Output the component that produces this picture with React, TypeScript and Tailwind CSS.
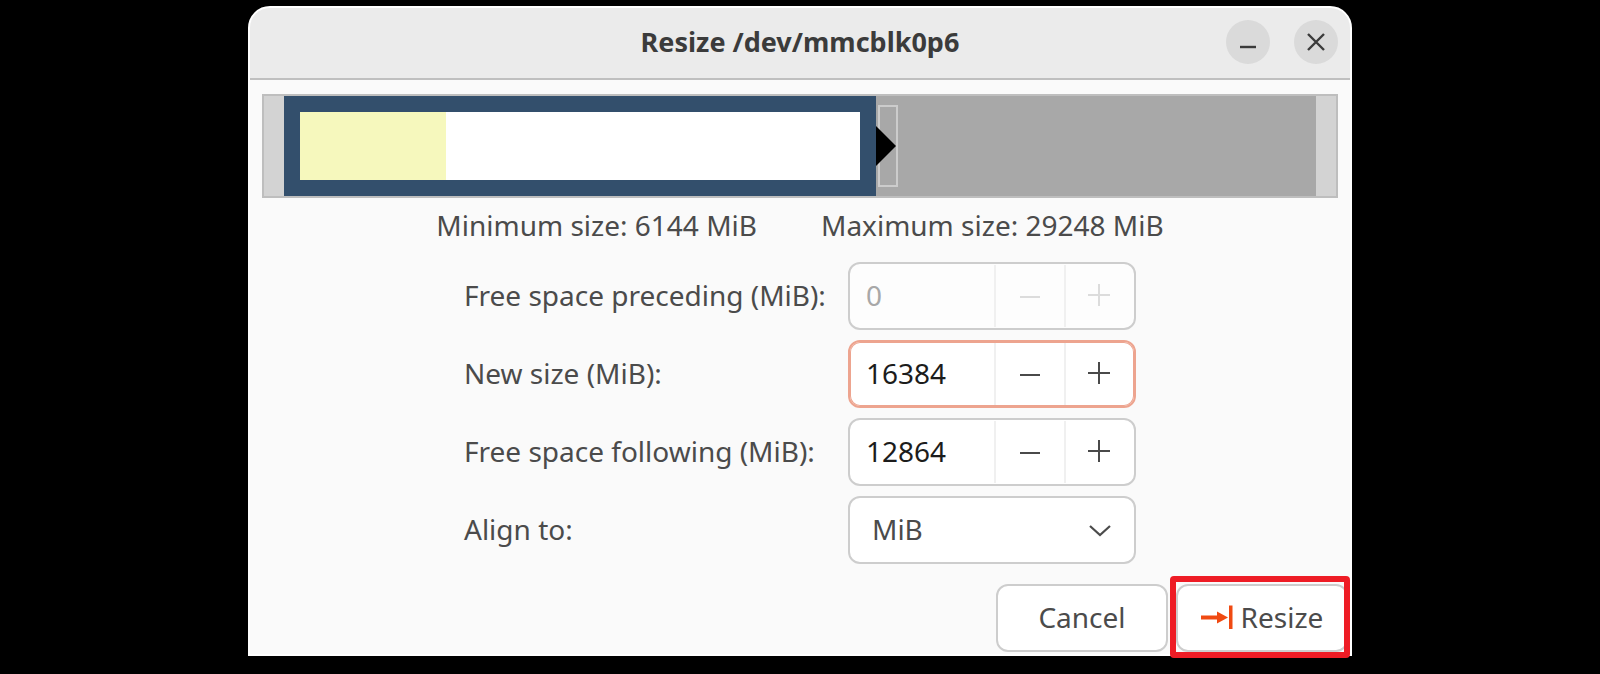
import { useState } from "react";
import type { ReactNode } from "react";

type SpinFieldProps = {
  id: string;
  label: string;
  value: number;
  onChange?: (value: number) => void;
  disabled?: boolean;
  focused?: boolean;
};

function MinusIcon() {
  return (
    <svg className="size-6" viewBox="0 0 24 24" fill="none" stroke="currentColor" strokeWidth="2" aria-hidden="true">
      <path d="M2 13h20" />
    </svg>
  );
}

function PlusIcon() {
  return (
    <svg className="size-6" viewBox="0 0 24 24" fill="none" stroke="currentColor" strokeWidth="2" aria-hidden="true">
      <path d="M0 11h22M11 0v22" />
    </svg>
  );
}

function FieldRow({ id, label, children }: { id: string; label: string; children: ReactNode }) {
  return (
    <div className="flex items-center">
      <label htmlFor={id} className="w-96 pb-0.5 whitespace-nowrap">
        {label}
      </label>
      {children}
    </div>
  );
}

function SpinField({ id, label, value, onChange, disabled = false, focused = false }: SpinFieldProps) {
  const border = focused ? "border-[#eda48f] ring-1 ring-[#eda48f] ring-inset" : "border-[#cdcdcd]";
  const colors = disabled ? "bg-[#fdfdfd] text-[#dcdcdc]" : "bg-white text-[#4a4a4a]";
  const change = (next: number) => onChange?.(Math.max(0, next));

  return (
    <FieldRow id={id} label={label}>
      <div className={`flex h-[68px] w-72 overflow-hidden rounded-xl border-2 ${border} ${colors}`}>
        <input
          id={id}
          type="text"
          inputMode="numeric"
          value={value}
          disabled={disabled}
          onChange={(e) => change(Number(e.target.value) || 0)}
          className={`min-w-0 flex-1 bg-transparent pb-0.5 pl-4 outline-none ${disabled ? "text-[#a8a8a8]" : "text-[#1c1c1c]"}`}
        />
        <button
          type="button"
          aria-label={`Decrease ${label}`}
          disabled={disabled}
          onClick={() => change(value - 1)}
          className="my-px flex w-[70px] items-center justify-center border-l-2 border-[#f0f0f0]"
        >
          <MinusIcon />
        </button>
        <button
          type="button"
          aria-label={`Increase ${label}`}
          disabled={disabled}
          onClick={() => change(value + 1)}
          className="my-px flex w-[70px] items-center justify-center border-l-2 border-[#f0f0f0]"
        >
          <PlusIcon />
        </button>
      </div>
    </FieldRow>
  );
}

function PartitionBar() {
  return (
    <div className="flex h-[104px] border-2 border-[#bebebe] bg-[#d3d3d3] px-5">
      <div className="flex w-[57.4%] border-[16px] border-[#334f6c] bg-white">
        <div className="w-[26%] bg-[#f6f8bd]" />
      </div>
      <div className="flex flex-1 items-center bg-[#a8a8a8]">
        <div className="ml-0.5 h-[82px] w-5 border-2 border-[#cccccc]">
          <svg className="-ml-1 h-full w-5" viewBox="0 0 20 78" aria-hidden="true">
            <path d="M0 19 20 39 0 59z" fill="#000" />
          </svg>
        </div>
      </div>
    </div>
  );
}

export default function App() {
  const [newSize, setNewSize] = useState(16384);
  const [following, setFollowing] = useState(12864);

  return (
    <div className="min-h-screen bg-black px-4 pt-1.5 font-['Noto_Sans',sans-serif] text-[28px] leading-9 text-[#4b4b4b]">
      <main className="mx-auto max-w-[1104px] rounded-t-[22px] border-2 border-white bg-[#fafafa]">
        <header className="grid h-[72px] grid-cols-[1fr_auto_1fr] items-center rounded-t-[20px] border-b-2 border-[#bfbfbf] bg-[#ebebeb] px-3 pb-0.5">
          <h1 className="col-start-2 text-[27px] font-bold text-[#3b3b3b]">Resize /dev/mmcblk0p6</h1>
          <div className="flex justify-end gap-6">
            <button
              type="button"
              aria-label="Minimize"
              className="flex size-11 items-center justify-center rounded-full bg-[#dadada] text-[#3b3b3b]"
            >
              <svg className="size-5" viewBox="0 0 20 20" stroke="currentColor" strokeWidth="2.4" aria-hidden="true">
                <path d="M2 15h16" />
              </svg>
            </button>
            <button
              type="button"
              aria-label="Close"
              className="flex size-11 items-center justify-center rounded-full bg-[#dadada] text-[#3b3b3b]"
            >
              <svg className="size-5" viewBox="0 0 20 20" stroke="currentColor" strokeWidth="2.4" aria-hidden="true">
                <path d="m2 2 16 16M18 2 2 18" />
              </svg>
            </button>
          </div>
        </header>

        <form onSubmit={(e) => e.preventDefault()}>
          <div className="px-3 pt-3.5">
            <PartitionBar />
          </div>
          <div className="flex justify-center gap-16 pt-[9px] pb-[19px] whitespace-nowrap">
            <p>Minimum size: 6144 MiB</p>
            <p>Maximum size: 29248 MiB</p>
          </div>

          <div className="mx-auto flex w-fit flex-col gap-2.5">
            <SpinField id="preceding" label="Free space preceding (MiB):" value={0} disabled />
            <SpinField id="new-size" label="New size (MiB):" value={newSize} onChange={setNewSize} focused />
            <SpinField id="following" label="Free space following (MiB):" value={following} onChange={setFollowing} />
            <FieldRow id="align" label="Align to:">
              <div className="relative flex h-[68px] w-72">
                <select
                  id="align"
                  defaultValue="MiB"
                  className="w-full appearance-none rounded-xl border-2 border-[#cdcdcd] bg-white pb-0.5 pl-[22px] outline-none"
                >
                  <option>MiB</option>
                  <option>Cylinder</option>
                  <option>None</option>
                </select>
                <svg
                  className="pointer-events-none absolute top-[22px] right-6 size-6"
                  viewBox="0 0 24 24"
                  fill="none"
                  stroke="currentColor"
                  strokeWidth="2.2"
                  aria-hidden="true"
                >
                  <path d="m2 8 10 9 10-9" />
                </svg>
              </div>
            </FieldRow>
          </div>

          <div className="flex justify-end gap-2 pt-5 pr-0.5 pb-0.5">
            <button type="button" className="h-[68px] w-[172px] rounded-xl border-2 border-[#cdcdcd] bg-white pb-0.5">
              Cancel
            </button>
            <button
              type="submit"
              className="relative flex h-[68px] w-[172px] items-center justify-center gap-2 rounded-xl border-2 border-[#cdcdcd] bg-white pb-0.5"
            >
              <svg className="h-6 w-8" viewBox="0 0 32 24" fill="#f04a12" aria-hidden="true">
                <path d="M0 10.500h16V6.500l11 6-11 6v-4h-16zM28 0.500h3.500v23.500h-3.500z" />
              </svg>
              Resize
              <span className="pointer-events-none absolute -top-2.5 -right-1 -bottom-2 -left-2 rounded-sm border-[6px] border-[#ee1c25]" />
            </button>
          </div>
        </form>
      </main>
    </div>
  );
}
